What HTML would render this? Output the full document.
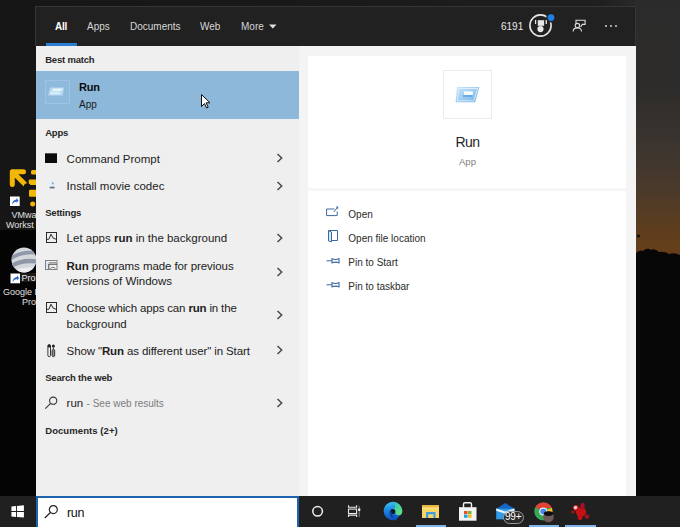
<!DOCTYPE html>
<html><head><meta charset="utf-8">
<style>
*{margin:0;padding:0;box-sizing:border-box}
html,body{width:680px;height:527px;overflow:hidden;background:#0a0a0a;font-family:"Liberation Sans",sans-serif;position:relative}
.a{position:absolute}
.t{position:absolute;white-space:nowrap;line-height:1}
svg{position:absolute;overflow:visible}
</style></head><body>
<div class="a" style="left:0;top:0;width:680px;height:230px;background:linear-gradient(to right,#161616 0px,#191919 300px,#1f1f1f 600px,#2a2a2a 640px)"></div>
<div class="a" style="left:0;top:230px;width:680px;height:266px;background:#040404"></div>
<div class="a" style="left:0;top:230px;width:36px;height:266px;background:#040404"></div>
<div class="a" style="left:635px;top:0;width:45px;height:270px;background:linear-gradient(#2b2b2b 0px,#2e2c2a 90px,#3a3430 140px,#4a3a2a 190px,#5e3e1e 230px,#6a4018 262px)"></div>
<svg style="left:635px;top:230px" width="45" height="266"><path d="M0 24Q4 19 8 21Q12 17 16 20Q20 18 24 22Q30 21 34 24Q40 22 45 25V266H0Z" fill="#070707"/><circle cx="3.5" cy="6" r="1.5" fill="#0e0b08"/></svg>
<div class="a" style="left:0;top:0;width:36px;height:496px;overflow:hidden">
<svg style="left:0;top:160px" width="40" height="50"><path d="M12.3 11.8H23.5M12.3 11.8V24.5M12.3 11.8L24.5 23.8" stroke="#f2b705" stroke-width="5" stroke-linecap="round" stroke-linejoin="round" fill="none"/><rect x="31" y="10" width="8" height="4.5" rx="1.5" fill="#f2b705"/><rect x="28.7" y="19.5" width="9" height="5.5" rx="1" fill="#f2b705"/><rect x="29" y="29.8" width="9" height="7" rx="1" fill="#f2b705"/><circle cx="32.7" cy="44" r="2.5" fill="#f2b705"/><circle cx="27.3" cy="26.7" r="3.5" fill="#141414"/><rect x="10" y="36.5" width="9.7" height="9.5" fill="#fff"/><path d="M12 44.5Q12.5 40 16.5 39.5V38L18.5 40.5L16.5 43V41.5Q14 41.5 12 44.5Z" fill="#2567c6"/></svg>
<div class="t" style="left:11.4px;top:211.2px;font-size:9px;color:#e0e0e0">VMwa</div>
<div class="t" style="left:6px;top:221.2px;font-size:9px;color:#e0e0e0">Workst</div>
<svg style="left:10px;top:244px" width="30" height="32"><defs><clipPath id="gc"><circle cx="14" cy="16" r="12.5"/></clipPath></defs><circle cx="14" cy="16" r="12.5" fill="#d4d7dc"/><g clip-path="url(#gc)"><path d="M0 13Q12 4 30 8V11Q12 8 0 17Z" fill="#8e98a8"/><path d="M0 21Q12 12 30 16V20Q12 17 0 25Z" fill="#8e98a8"/><path d="M0 28Q12 22 30 24V30H0Z" fill="#eceef0"/></g></svg>
<div class="a" style="left:20px;top:273px;width:16px;height:8.5px;background:#1a1a1a"></div>
<svg style="left:9.5px;top:272.5px" width="11" height="11"><rect x="0.5" y="0.5" width="9.5" height="9.8" fill="#fff"/><path d="M2.5 9Q3 4.5 7 4V2.5L9 5L7 7.5V6Q4.5 6 2.5 9Z" fill="#2567c6"/></svg>
<div class="t" style="left:21.5px;top:273.9px;font-size:9px;color:#f0f0f0">Pro</div>
<div class="t" style="left:2.9px;top:287.6px;font-size:9px;color:#e0e0e0">Google E</div>
<div class="t" style="left:22px;top:298.4px;font-size:9px;color:#e0e0e0">Pro</div>
</div>
<div class="a" style="left:35px;top:6px;width:601px;height:40px;background:#212121;border:1px solid #363636;border-bottom:none"></div>
<div class="a" style="left:36px;top:46px;width:263px;height:450px;background:#efefef"></div>
<div class="a" style="left:299px;top:46px;width:337px;height:450px;background:#f4f4f4"></div>
<div class="a" style="left:308px;top:56px;width:317.6px;height:440px;background:#fff"></div>
<div class="a" style="left:308px;top:188px;width:317.6px;height:3px;background:#f6f6f6"></div>
<div class="t" style="left:55.0px;top:21.73px;font-size:10px;color:#fff;font-weight:bold;letter-spacing:-0.2px;">All</div>
<div class="a" style="left:46px;top:43px;width:31px;height:3px;background:#2b7cd3"></div>
<div class="t" style="left:87.0px;top:21.73px;font-size:10px;color:#d6d6d6;font-weight:normal;">Apps</div>
<div class="t" style="left:130.0px;top:21.73px;font-size:10px;color:#d6d6d6;font-weight:normal;">Documents</div>
<div class="t" style="left:200.0px;top:21.73px;font-size:10px;color:#d6d6d6;font-weight:normal;">Web</div>
<div class="t" style="left:241.0px;top:21.73px;font-size:10px;color:#d6d6d6;font-weight:normal;">More</div>
<svg style="left:269px;top:24px" width="8" height="5"><path d="M0 0.5H7.5L3.75 4.5Z" fill="#e0e0e0"/></svg>
<div class="t" style="left:501.0px;top:22.23px;font-size:10px;color:#e6e6e6;font-weight:normal;">6191</div>
<div class="t" style="left:45.2px;top:55.36px;font-size:9.5px;color:#262626;font-weight:bold;letter-spacing:-0.2px;">Best match</div>
<div class="a" style="left:36px;top:71px;width:263px;height:48px;background:#8db8da"></div>
<div class="t" style="left:79.0px;top:81.79px;font-size:11px;color:#0a0a0a;font-weight:bold;letter-spacing:-0.2px;">Run</div>
<div class="t" style="left:79.0px;top:100.23px;font-size:10px;color:#1a1a1a;font-weight:normal;">App</div>
<div class="t" style="left:45.2px;top:128.46px;font-size:9.5px;color:#262626;font-weight:bold;letter-spacing:-0.2px;">Apps</div>
<div class="t" style="left:66.6px;top:154.27px;font-size:11.5px;color:#222222;font-weight:normal;">Command Prompt</div>
<div class="t" style="left:66.6px;top:181.47px;font-size:11.5px;color:#222222;font-weight:normal;">Install movie codec</div>
<div class="t" style="left:45.2px;top:208.46px;font-size:9.5px;color:#262626;font-weight:bold;letter-spacing:-0.2px;">Settings</div>
<div class="t" style="left:66.6px;top:233.47px;font-size:11.5px;color:#222222;font-weight:normal;">Let apps <b>run</b> in the background</div>
<div class="t" style="left:66.6px;top:261.07px;font-size:11.5px;color:#222222;font-weight:normal;letter-spacing:-0.08px;"><b>Run</b> programs made for previous</div>
<div class="t" style="left:66.6px;top:275.57px;font-size:11.5px;color:#222222;font-weight:normal;">versions of Windows</div>
<div class="t" style="left:66.6px;top:303.27px;font-size:11.5px;color:#222222;font-weight:normal;letter-spacing:-0.16px;">Choose which apps can <b>run</b> in the</div>
<div class="t" style="left:66.6px;top:318.57px;font-size:11.5px;color:#222222;font-weight:normal;">background</div>
<div class="t" style="left:66.6px;top:345.67px;font-size:11.5px;color:#222222;font-weight:normal;letter-spacing:-0.12px;">Show &quot;<b>Run</b> as different user&quot; in Start</div>
<div class="t" style="left:45.2px;top:373.46px;font-size:9.5px;color:#262626;font-weight:bold;letter-spacing:-0.2px;">Search the web</div>
<div class="t" style="left:66.6px;top:398.47px;font-size:11.5px;color:#222222;font-weight:normal;">run</div>
<div class="t" style="left:86.6px;top:398.84px;font-size:10px;color:#7c7c7c;font-weight:normal;">- See web results</div>
<div class="t" style="left:45.2px;top:426.26px;font-size:9.5px;color:#262626;font-weight:bold;letter-spacing:0.08px;">Documents (2+)</div>
<svg style="left:276px;top:153.0px" width="8" height="10"><path d="M1.5 1L5.7 5L1.5 9" stroke="#4a4a4a" stroke-width="1.5" fill="none"/></svg>
<svg style="left:276px;top:180.5px" width="8" height="10"><path d="M1.5 1L5.7 5L1.5 9" stroke="#4a4a4a" stroke-width="1.5" fill="none"/></svg>
<svg style="left:276px;top:233.0px" width="8" height="10"><path d="M1.5 1L5.7 5L1.5 9" stroke="#4a4a4a" stroke-width="1.5" fill="none"/></svg>
<svg style="left:276px;top:266.9px" width="8" height="10"><path d="M1.5 1L5.7 5L1.5 9" stroke="#4a4a4a" stroke-width="1.5" fill="none"/></svg>
<svg style="left:276px;top:309.9px" width="8" height="10"><path d="M1.5 1L5.7 5L1.5 9" stroke="#4a4a4a" stroke-width="1.5" fill="none"/></svg>
<svg style="left:276px;top:345.4px" width="8" height="10"><path d="M1.5 1L5.7 5L1.5 9" stroke="#4a4a4a" stroke-width="1.5" fill="none"/></svg>
<svg style="left:276px;top:398.0px" width="8" height="10"><path d="M1.5 1L5.7 5L1.5 9" stroke="#4a4a4a" stroke-width="1.5" fill="none"/></svg>
<div class="a" style="left:443px;top:70px;width:49px;height:49px;border:1px solid #ececec"></div>
<div class="t" style="left:367.5px;width:200px;text-align:center;top:135.45px;font-size:14px;color:#262626;font-weight:normal;letter-spacing:-0.6px;">Run</div>
<div class="t" style="left:367.5px;width:200px;text-align:center;top:156.66px;font-size:9.5px;color:#808080;font-weight:normal;letter-spacing:0.1px;">App</div>
<div class="t" style="left:348.3px;top:209.63px;font-size:10px;color:#2a2a2a;font-weight:normal;">Open</div>
<div class="t" style="left:348.3px;top:233.94px;font-size:10px;color:#2a2a2a;font-weight:normal;">Open file location</div>
<div class="t" style="left:348.3px;top:258.04px;font-size:10px;color:#2a2a2a;font-weight:normal;">Pin to Start</div>
<div class="t" style="left:348.3px;top:281.74px;font-size:10px;color:#2a2a2a;font-weight:normal;">Pin to taskbar</div>
<div class="a" style="left:45px;top:80px;width:24.5px;height:24px;border:1px solid #9fc3e2;background:#90badc"></div>
<svg style="left:47px;top:86px" width="19" height="11"><path d="M3 1.5H17.2L15.8 9.6H1.2Z" fill="#b4d6ee"/><path d="M6 2.6H15.5L14.3 5.2H5Z" fill="#e4f4fc"/><path d="M3.5 5.8H13.5L12.8 8.4H3Z" fill="#d2ecf9"/></svg>
<svg style="left:201px;top:93.5px" width="12" height="16"><path d="M0.5 0.5V12.5L3.5 9.5L5.6 14L7.2 13.2L5.1 8.8H9Z" fill="#fff" stroke="#111" stroke-width="1" stroke-linejoin="round"/></svg>
<div class="a" style="left:45px;top:153px;width:12px;height:9.5px;background:#0c0c0c;border-top:1px solid #555"></div>
<svg style="left:47.5px;top:180px" width="10" height="10"><rect x="0.6" y="0.6" width="7.8" height="8.3" fill="#e6effa"/><path d="M4.8 1.8L6 4.2H3.6Z" fill="#8c9ab0"/><rect x="1.7" y="6.7" width="4.8" height="1.7" fill="#6c6c74"/></svg>
<svg style="left:45px;top:231px" width="13" height="13"><rect x="1.5" y="1.5" width="10" height="10" fill="none" stroke="#2a2a2a" stroke-width="1"/><path d="M1.5 8.3H3.8L6 3.2L8.2 7.2L11.5 8.3" fill="none" stroke="#2a2a2a" stroke-width="1"/></svg>
<svg style="left:45px;top:301px" width="13" height="13"><rect x="1.5" y="1.5" width="10" height="10" fill="none" stroke="#2a2a2a" stroke-width="1"/><path d="M1.5 8.3H3.8L6 3.2L8.2 7.2L11.5 8.3" fill="none" stroke="#2a2a2a" stroke-width="1"/></svg>
<svg style="left:45px;top:259px" width="13" height="11"><rect x="0.5" y="1.5" width="11.5" height="9" fill="#f2f2f2" stroke="#808080" stroke-width="1"/><rect x="1" y="2" width="2.3" height="8" fill="#dde9f4"/><rect x="4" y="3" width="7.5" height="1.3" fill="#9c9c9c"/><path d="M3.8 10V5.3H12" fill="none" stroke="#505050" stroke-width="1.1"/><path d="M5.2 10Q7.8 6.6 10.6 10" fill="#fafafa" stroke="#6a6a6a" stroke-width="1"/></svg>
<svg style="left:46px;top:343px" width="10" height="15"><rect x="1.9" y="1.6" width="2.6" height="12" rx="1.3" fill="#f4f4f4" stroke="#333" stroke-width="1"/><circle cx="3.2" cy="2.9" r="1.5" fill="#222"/><circle cx="7.4" cy="2.9" r="1.5" fill="#222"/><path d="M7.4 4V6.5" stroke="#444" stroke-width="1"/><rect x="6.1" y="6.5" width="2.6" height="7.1" rx="1.2" fill="#8a8a8a" stroke="#333" stroke-width="1"/></svg>
<svg style="left:44px;top:395px" width="15" height="15"><circle cx="9.2" cy="5.7" r="3.6" fill="none" stroke="#333" stroke-width="1.1"/><path d="M6.6 8.3L1.3 13.6" stroke="#333" stroke-width="1.1"/></svg>
<svg style="left:454px;top:86px" width="28" height="18"><defs><linearGradient id="rg" x1="0" x2="1" y1="0" y2="1"><stop offset="0" stop-color="#cfe6f8"/><stop offset="0.5" stop-color="#9fcdf2"/><stop offset="1" stop-color="#6eb0e6"/></linearGradient></defs><path d="M3 1H25.5L21.2 16.3H1.6Z" fill="url(#rg)"/><path d="M4.5 2.5H23.5L20 14.8H3.3Z" fill="none" stroke="#e6f3fc" stroke-width="0.8"/><rect x="10" y="5.4" width="8.8" height="3.5" fill="#fafdff"/><path d="M9 9.2H18.6L18.2 10.8H8.7Z" fill="#5aa2de"/></svg>
<svg style="left:325px;top:205px" width="15" height="12"><path d="M9.5 4H1.6V10.6H12.2V6.5" fill="none" stroke="#3b6aa0" stroke-width="1"/><path d="M8.8 7L12.6 2.3" stroke="#3b6aa0" stroke-width="1"/><path d="M10.6 1.6H13.2V4.2Z" fill="#3b6aa0"/></svg>
<svg style="left:327px;top:229px" width="12" height="15"><path d="M1.5 1.5H10.5V11.5H4.5" fill="none" stroke="#3b6aa0" stroke-width="1"/><path d="M1.5 1.5L4.5 3V12.8L1.5 12Z" fill="#d6eaf8" stroke="#3b6aa0" stroke-width="1" stroke-linejoin="round"/></svg>
<svg style="left:325.5px;top:256.7px" width="15" height="8"><path d="M0.5 3.8H6" stroke="#3b6aa0" stroke-width="1"/><path d="M6 1V6.6M6 1.8Q9.5 3.2 13 1.8M6 5.8Q9.5 4.4 13 5.8M13 1V6.6" fill="none" stroke="#3b6aa0" stroke-width="1.1"/></svg>
<svg style="left:325.5px;top:280.8px" width="15" height="8"><path d="M0.5 3.8H6" stroke="#3b6aa0" stroke-width="1"/><path d="M6 1V6.6M6 1.8Q9.5 3.2 13 1.8M6 5.8Q9.5 4.4 13 5.8M13 1V6.6" fill="none" stroke="#3b6aa0" stroke-width="1.1"/></svg>
<svg style="left:527px;top:12px" width="30" height="28"><circle cx="13.5" cy="13.5" r="10.6" fill="none" stroke="#e8e8e8" stroke-width="1.6"/><rect x="10.8" y="8.2" width="6.3" height="5.6" fill="#e8e8e8"/><rect x="8" y="8" width="1.2" height="4" fill="#e8e8e8"/><rect x="18.6" y="8" width="1.3" height="4" fill="#e8e8e8"/><circle cx="13.5" cy="17.1" r="3.1" fill="#e8e8e8"/><circle cx="24" cy="5.6" r="4.8" fill="#212121"/><circle cx="24" cy="5.6" r="3.4" fill="#1e80e3"/></svg>
<svg style="left:571px;top:18px" width="17" height="16"><path d="M5 5.8V2.2H14.1V6.4H11.3L9.6 9" fill="none" stroke="#dcdcdc" stroke-width="1.1"/><circle cx="6.4" cy="7.6" r="2.2" fill="none" stroke="#dcdcdc" stroke-width="1.1"/><path d="M2.1 13.6Q2.1 9.9 6.4 9.9Q10.5 9.9 10.5 13.6" fill="none" stroke="#dcdcdc" stroke-width="1.1"/></svg>
<div class="a" style="left:605.4px;top:25.2px;width:1.8px;height:1.8px;background:#cfcfcf;border-radius:1px"></div>
<div class="a" style="left:610.1px;top:25.2px;width:1.8px;height:1.8px;background:#cfcfcf;border-radius:1px"></div>
<div class="a" style="left:614.8px;top:25.2px;width:1.8px;height:1.8px;background:#cfcfcf;border-radius:1px"></div>
<div class="a" style="left:0;top:496px;width:680px;height:31px;background:#202020"></div>
<div class="a" style="left:36px;top:496px;width:263px;height:31px;background:#fff;border:2px solid #1c64ad;border-bottom:none"></div>
<div class="t" style="left:67.0px;top:506.72px;font-size:12.5px;color:#111;font-weight:normal;letter-spacing:-0.3px;">run</div>
<svg style="left:10px;top:504px" width="16" height="15"><path d="M1.4 2.6L6.1 2V7H1.4Z M7 1.9L13.9 1.2V7H7Z M1.4 7.9H6.1V13L1.4 12.5Z M7 7.9H13.9V13.6L7 13.1Z" fill="#fff"/></svg>
<svg style="left:43px;top:503px" width="17" height="17"><circle cx="10.3" cy="6.6" r="4" fill="none" stroke="#222" stroke-width="1.2"/><path d="M7.4 9.5L1.8 15" stroke="#222" stroke-width="1.2"/></svg>
<svg style="left:310px;top:504.4px" width="15" height="15"><circle cx="7.6" cy="7.3" r="4.8" fill="none" stroke="#f0f0f0" stroke-width="1.5"/></svg>
<svg style="left:344px;top:502px" width="18" height="18"><path d="M4.5 3.3V5.2H12.6V3.3M4.5 15V13.1H12.6V15" fill="none" stroke="#e8e8e8" stroke-width="1.1"/><rect x="4.5" y="7.1" width="8.1" height="4.4" fill="none" stroke="#e8e8e8" stroke-width="1.1"/><path d="M15.2 3.8V15" stroke="#8a8a8a" stroke-width="0.9"/><rect x="14.1" y="6.6" width="2.2" height="2.2" fill="#fff"/></svg>
<svg style="left:380px;top:499px" width="26" height="26"><defs><linearGradient id="eg1" x1="0.3" y1="0" x2="0.5" y2="1"><stop offset="0" stop-color="#3ec6f2"/><stop offset="0.45" stop-color="#1c82e2"/><stop offset="1" stop-color="#0d4cb6"/></linearGradient><linearGradient id="eg2" x1="0" y1="0" x2="1" y2="1"><stop offset="0" stop-color="#2cc4c8"/><stop offset="1" stop-color="#6ee46a"/></linearGradient></defs><circle cx="13" cy="12" r="9.3" fill="url(#eg1)"/><path d="M14 3Q21 4.5 22.3 11.5Q22.5 16 18.5 16.2Q15.2 16 15.2 13.2Q15.5 10.5 13 9.8Q17 9 14 3Z" fill="url(#eg2)"/><circle cx="12.8" cy="12.6" r="2.5" fill="#0a1626"/><path d="M10.6 12.5Q10.2 16.3 13.2 18" stroke="#0b3f96" stroke-width="1.8" fill="none"/><path d="M17 21.5Q17.2 17.2 22.6 15.2L26 15V26H17Z" fill="#202020"/></svg>
<svg style="left:421px;top:504px" width="19" height="16"><rect x="1" y="1" width="17" height="13" fill="#f8d564"/><rect x="1" y="1" width="17" height="2" fill="#e8b640"/><rect x="1" y="4.2" width="17" height="1.2" fill="#fbe07a"/><path d="M5 14V8H14.5V14H12.4V10.3H7.2V14Z" fill="#3f9ce0"/></svg>
<div class="a" style="left:416px;top:524.5px;width:30px;height:2.5px;background:#80b4ea"></div>
<svg style="left:457px;top:501px" width="21" height="21"><path d="M6.5 6.8V3.2Q6.5 1.8 8 1.8H13Q14.5 1.8 14.5 3.2V6.8" fill="none" stroke="#f2f2f2" stroke-width="1.4"/><rect x="2" y="6.2" width="17.5" height="13.5" fill="#f4f4f4"/><rect x="7" y="10" width="3.5" height="3.2" fill="#e5532b"/><rect x="11" y="10" width="3.5" height="3.2" fill="#7eb829"/><rect x="7" y="13.6" width="3.5" height="3.2" fill="#1ea2e6"/><rect x="11" y="13.6" width="3.5" height="3.2" fill="#f5b81a"/></svg>
<svg style="left:495px;top:502px" width="22" height="19"><path d="M1.2 6.8L10.2 1L19.5 6.8Z" fill="#1566c8"/><rect x="1.2" y="6.5" width="18.3" height="10.8" fill="#2f9be8"/><path d="M1.2 6.5L10.2 9.5L19.5 6.5V8.8L10.2 11.8L1.2 8.8Z" fill="#e8f6fd"/></svg>
<div class="a" style="left:503px;top:510.5px;width:21px;height:13px;border-radius:7px;background:#2a2a2a;border:1px solid #9a9a9a"></div>
<div class="t" style="left:505px;top:512.3px;font-size:10px;color:#fff;letter-spacing:-0.2px">99+</div>
<svg style="left:533px;top:501px" width="24" height="23"><circle cx="10.3" cy="10.5" r="9" fill="#3aa757"/><path d="M10.3 10.5L2.5 6Q5 1.5 10.3 1.5Q16.5 1.5 18.9 7H10.3Z" fill="#e34133"/><path d="M10.3 10.5L18.9 7Q19.8 9.5 19.2 12L14 17L10.3 10.5Z" fill="#f6c026"/><circle cx="10.3" cy="10.5" r="4" fill="#fff"/><circle cx="10.3" cy="10.5" r="3" fill="#4a86e8"/><ellipse cx="15.5" cy="15.8" rx="5.3" ry="5.5" fill="#6e5a5a"/><ellipse cx="15.5" cy="12.6" rx="4.6" ry="2.4" fill="#0e0e0e"/></svg>
<div class="a" style="left:528.5px;top:524.5px;width:30px;height:2.5px;background:#80b4ea"></div>
<svg style="left:566px;top:500px" width="28" height="24"><g fill="#c41212"><ellipse cx="15" cy="12" rx="5.2" ry="4.6"/><circle cx="10" cy="8" r="3"/><ellipse cx="16.5" cy="6.2" rx="2.2" ry="3.5" fill="#a8102a"/><ellipse cx="14" cy="17.2" rx="2.3" ry="2.8"/><ellipse cx="21" cy="16.5" rx="2.2" ry="2.3" fill="#a81020"/><ellipse cx="6.8" cy="12" rx="2.2" ry="1.5" fill="#8a1a10"/></g><circle cx="9.5" cy="7.6" r="1.8" fill="#f0c8c8"/></svg>
<div class="a" style="left:565px;top:524.5px;width:31px;height:2.5px;background:#80b4ea"></div>
</body></html>
